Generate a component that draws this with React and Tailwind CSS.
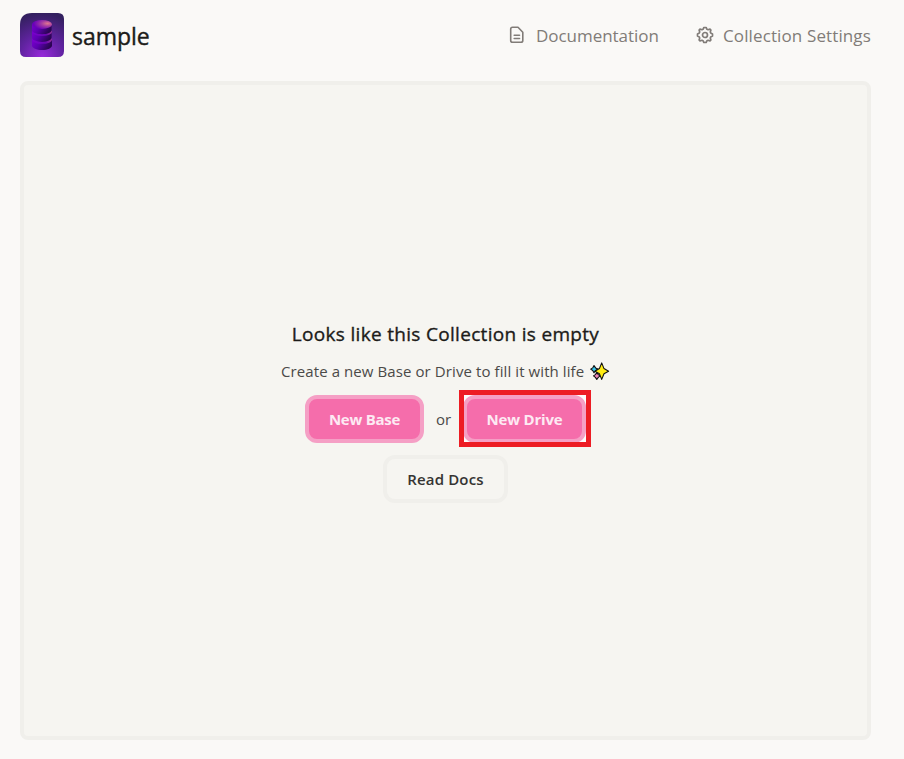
function CollectionLogo() {
  return (
    <svg width="44" height="44" viewBox="0 0 44 44" aria-hidden="true">
      <defs>
        <radialGradient id="tile" cx="0.5" cy="1" r="1">
          <stop offset="0" stopColor="#982bdb" />
          <stop offset="0.5" stopColor="#6023a0" />
          <stop offset="1" stopColor="#33205f" />
        </radialGradient>
        <linearGradient id="side" x1="0" y1="0" x2="1" y2="0.35">
          <stop offset="0" stopColor="#7a00cf" />
          <stop offset="0.45" stopColor="#5c00b0" />
          <stop offset="1" stopColor="#2a0552" />
        </linearGradient>
        <radialGradient id="lid" cx="0.78" cy="0.4" r="0.7">
          <stop offset="0" stopColor="#e0758f" />
          <stop offset="0.45" stopColor="#a23aa3" />
          <stop offset="1" stopColor="#6a00bb" />
        </radialGradient>
        <linearGradient id="rim" x1="0" y1="0" x2="1" y2="0">
          <stop offset="0" stopColor="#7a00cf" />
          <stop offset="0.7" stopColor="#6a06b2" />
          <stop offset="1" stopColor="#9a3496" />
        </linearGradient>
      </defs>
      <path d="M12 0H38Q44 0 44 6V38Q44 44 38 44H6Q0 44 0 38V12Q0 0 12 0Z" fill="url(#tile)" />
      <path d="M12 27V32.5C12 35 16.5 37 22 37S32 35 32 32.5V27Z" fill="url(#side)" />
      <ellipse cx="22" cy="26.8" rx="10" ry="4" fill="url(#rim)" />
      <path d="M12 19V24.6C12 27 16.5 28.9 22 28.9S31.6 27 31.6 24.6V19Z" fill="url(#side)" />
      <ellipse cx="22" cy="19" rx="10" ry="4" fill="url(#rim)" />
      <path d="M12 11.2V17C12 19.4 16.5 21.2 22 21.2S31.6 19.4 31.6 17V11.2Z" fill="url(#side)" />
      <ellipse cx="22" cy="11.4" rx="10" ry="4.5" fill="url(#lid)" />
    </svg>
  );
}

function DocumentIcon() {
  return (
    <svg width="16" height="18" viewBox="0 0 16 18" fill="none" stroke="#817c78" strokeWidth="1.6" strokeLinejoin="round" strokeLinecap="round" aria-hidden="true">
      <path d="M3.5 1.3H9L13.8 6.2V14.4Q13.8 16.3 11.9 16.3H3.6Q1.7 16.3 1.7 14.4V3.1Q1.7 1.3 3.5 1.3Z" />
      <path d="M5.2 9.2H10.5M5.2 12.5H10.5" />
    </svg>
  );
}

function GearIcon() {
  return (
    <svg width="18" height="18" viewBox="0 0 18 18" fill="none" stroke="#817c78" strokeWidth="1.7" strokeLinejoin="round" aria-hidden="true">
      <circle cx="9" cy="9" r="2.5" />
      <path d="M7.9 1.5H10.1L11 3.3L12 3.7L14 3.1L14.9 4L14.3 6L14.7 7L16.5 7.9V10.1L14.7 11L14.3 12L14.9 14L14 14.9L12 14.3L11 14.7L10.1 16.5H7.9L7 14.7L6 14.3L4 14.9L3.1 14L3.7 12L3.3 11L1.5 10.1V7.9L3.3 7L3.7 6L3.1 4L4 3.1L6 3.7L7 3.3Z" />
    </svg>
  );
}

function Sparkles() {
  return (
    <svg width="20" height="20" viewBox="0 0 20 20" stroke="#111111" strokeWidth="1.1" strokeLinejoin="round" aria-hidden="true">
      <path d="M4 4.6L5.6 6.9L7.8 8.1L5.6 9.5L4 11.8L2.7 9.5L.7 8.1L2.7 6.9Z" fill="#37c8ee" />
      <path d="M6.8 11.5L8.3 13.6L10.2 14.9L8.3 16.4L6.8 18.5L5.4 16.4L3.5 14.9L5.4 13.6Z" fill="#ee86b8" />
      <path d="M11.7 1.9L14 7.6L18.6 10.2L14 12.8L11.7 18.4L9.4 12.8L4.9 10.2L9.4 7.6Z" fill="#ffec12" />
    </svg>
  );
}

export default function App() {
  return (
    <div className="flex h-[759px] w-[904px] flex-col overflow-hidden bg-[#faf9f7] pl-5 pr-[33px] pt-[13px] font-['Open_Sans','Noto_Sans',sans-serif] text-[#1c1b19]">
      <header className="flex h-11 shrink-0 items-center">
        <CollectionLogo />
        <h1 className="ml-2 mt-0.5 whitespace-nowrap text-[23px] font-medium leading-8 tracking-[-0.05px] [-webkit-text-stroke:0.4px]">sample</h1>
        <nav className="ml-auto flex items-center text-[17px] leading-7 text-[#817c78]">
          <a className="flex items-center">
            <DocumentIcon />
            <span className="ml-[11px] w-[123px] whitespace-nowrap pt-0.5 tracking-[-0.04px]">Documentation</span>
          </a>
          <a className="ml-[37px] flex items-center">
            <GearIcon />
            <span className="ml-[9px] w-[148px] whitespace-nowrap pt-0.5 tracking-[0.12px]">Collection Settings</span>
          </a>
        </nav>
      </header>
      <main className="mt-6 flex h-[659px] shrink-0 flex-col items-center rounded-lg border-4 border-[#f0efeb] bg-[#f6f5f1] pt-[235px]">
        <h2 className="h-7 whitespace-nowrap text-[19px] font-medium leading-7 tracking-[0.31px] [-webkit-text-stroke:0.35px]">Looks like this Collection is empty</h2>
        <div className="mt-[11px] flex h-6 items-center text-[15px] text-[#4b4a48]">
          <span className="w-[304px] whitespace-nowrap tracking-[0.09px]">Create a new Base or Drive to fill it with life</span>
          <span className="ml-[5px]"><Sparkles /></span>
        </div>
        <div className="mt-[7px] flex h-[57px] items-center pl-[5px]">
          <button className="h-12 w-[119px] whitespace-nowrap rounded-xl border-4 border-[#f59fc5] bg-[#f56dab] pt-px text-[15px] font-bold tracking-[-0.25px] text-[#fdeaf3]">New Base</button>
          <span className="ml-3 w-[15px] whitespace-nowrap pt-0.5 text-[15px] text-[#4b4a48]">or</span>
          <div className="ml-2 h-[57px] w-[132px] overflow-hidden border-[5px] border-[#ed1c24] bg-[#fdfcfb]">
            <button className="-ml-px h-12 w-[123px] whitespace-nowrap rounded-xl border-4 border-[#f59fc5] bg-[#f56dab] pt-px text-[15px] font-bold tracking-[-0.2px] text-[#fdeaf3]">New Drive</button>
          </div>
        </div>
        <button className="mt-2 h-12 w-[125px] whitespace-nowrap rounded-xl border-4 border-[#f0efeb] text-[15px] font-semibold tracking-[0.15px] text-[#353432]">Read Docs</button>
      </main>
    </div>
  );
}
